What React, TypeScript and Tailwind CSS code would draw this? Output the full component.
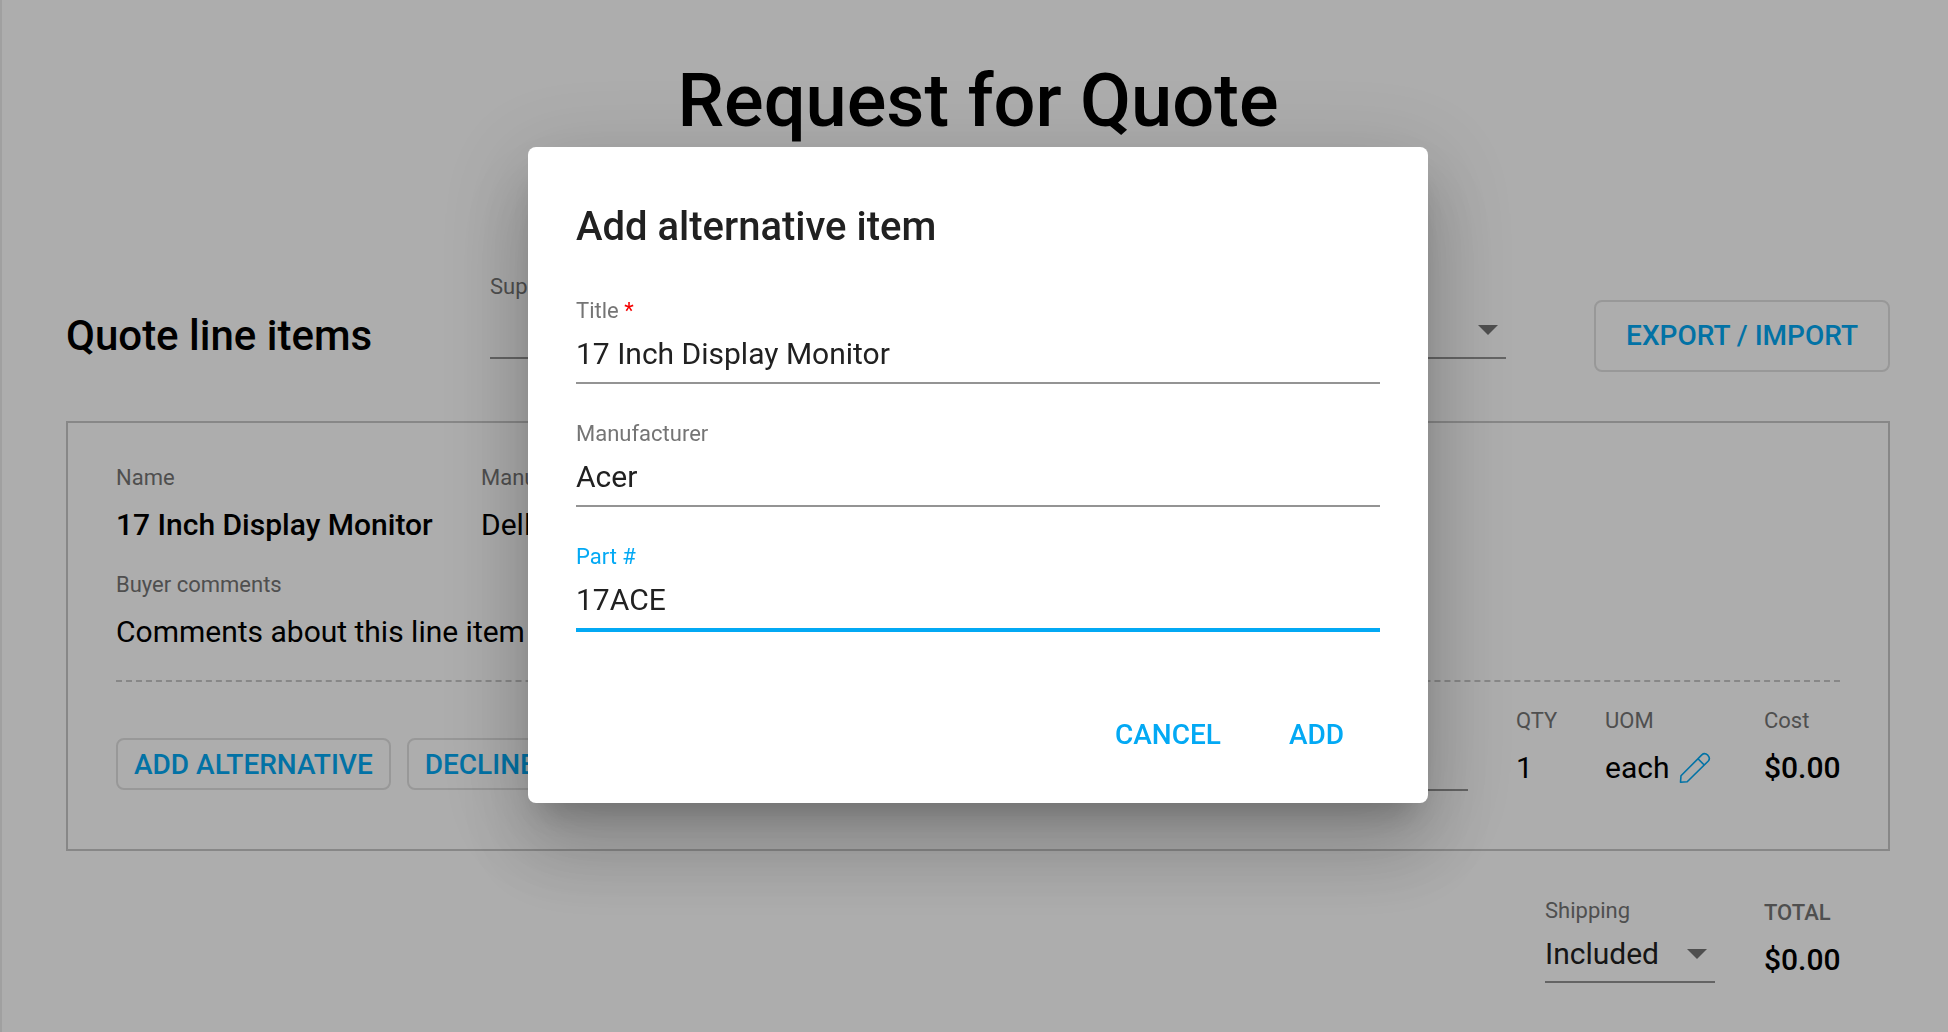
import { useState } from 'react'

function PencilIcon() {
  return (
    <svg width="32" height="32" viewBox="0 0 32 32" fill="none" stroke="currentColor" strokeWidth="1.6" strokeLinejoin="round">
      <path d="M1.5 30.2 L2 23.8 L22.8 2.9 Q25.6 0.3 28.8 3.2 Q31.8 6.4 29.1 9.2 L8.2 29.8 Z" />
      <path d="M19 6.8 L25.2 13" />
    </svg>
  )
}

function Caret({ className }: { className: string }) {
  return (
    <svg width="20" height="10" viewBox="0 0 20 10" className={`pointer-events-none absolute top-1/2 -translate-y-1/2 ${className}`}>
      <path d="M0 0h20L10 10z" fill="#757575" />
    </svg>
  )
}

interface InfoProps {
  label: string
  children: React.ReactNode
  className?: string
  labelClass?: string
}

function Info({ label, children, className = '', labelClass = '' }: InfoProps) {
  return (
    <div className={className}>
      <div className={`text-[22px] leading-7 text-[#757575] ${labelClass}`}>{label}</div>
      <div className="mt-4 flex text-[30px] leading-[34px] whitespace-nowrap text-black">{children}</div>
    </div>
  )
}

interface FieldProps {
  id: string
  label: string
  value: string
  onChange: (value: string) => void
  required?: boolean
  active?: boolean
}

function Field({ id, label, value, onChange, required, active }: FieldProps) {
  return (
    <div className="flex flex-col items-start">
      <label htmlFor={id} className={`text-[22px] leading-7 ${active ? 'text-[#03a9f4]' : 'text-[#757575]'}`}>
        {label}
        {required && <span className="text-[#f50000]"> *</span>}
      </label>
      <input
        id={id}
        type="text"
        value={value}
        required={required}
        onChange={(e) => onChange(e.target.value)}
        className={`w-full bg-transparent text-[30px] text-[#212121] outline-none ${
          active ? 'h-[61px] border-b-4 border-[#03a9f4]' : 'h-[59px] border-b-2 border-[#949494]'
        }`}
      />
    </div>
  )
}

export default function App() {
  const [title, setTitle] = useState('17 Inch Display Monitor')
  const [manufacturer, setManufacturer] = useState('Acer')
  const [part, setPart] = useState('17ACE')

  return (
    <div className="min-h-screen border-l-2 border-[#ececec] bg-white font-[Roboto,sans-serif]">
      <main className="pt-[61px] pr-[58px] pb-12 pl-16">
        <h1 className="text-center text-[74px] leading-20 font-medium text-black">Request for Quote</h1>

        {/* Section header */}
        <div className="mt-[132px] flex items-center">
          <h2 className="w-[424px] text-[42px] leading-12 font-medium text-black">Quote line items</h2>
          <div className="mr-[88px] flex flex-1 flex-col items-start pb-10">
            <label htmlFor="supplier" className="text-[22px] leading-7 text-[#757575]">Supplier</label>
            <div className="relative w-full">
              <select id="supplier" className="block h-[58px] w-full appearance-none border-b-2 border-[#949494] bg-transparent text-[30px] outline-none">
                <option value=""></option>
              </select>
              <Caret className="right-2" />
            </div>
          </div>
          <button type="button" className="h-18 rounded-lg border-2 border-[#e0e0e0] px-[30px] text-[28px] font-medium text-[#03a9f4]">
            EXPORT / IMPORT
          </button>
        </div>

        {/* Line item */}
        <section className="mt-[22px] border-2 border-[#c8c8c8] px-12 pt-[41px] pb-[58px]">
          <div className="flex">
            <Info label="Name" className="w-[365px]">
              <span className="font-medium">17 Inch Display Monitor</span>
            </Info>
            <Info label="Manufacturer">Dell</Info>
          </div>
          <Info label="Buyer comments" className="mt-[29px] w-fit">Comments about this line item</Info>

          <div className="mt-[31px] flex border-t-2 border-dashed border-[#c8c8c8] pt-[25px]">
            <div className="mt-[31px] flex h-13 gap-4">
              <button type="button" className="rounded-lg border-2 border-[#e0e0e0] px-4 pt-0.5 text-[28px] font-medium text-[#03a9f4]">
                ADD ALTERNATIVE
              </button>
              <button type="button" className="rounded-lg border-2 border-[#e0e0e0] px-4 pt-0.5 text-[28px] font-medium text-[#03a9f4]">
                DECLINE
              </button>
            </div>
            <div className="mr-12 ml-auto w-[200px] pt-7">
              <input type="text" aria-label="Price" className="block h-14 w-full border-b-2 border-[#949494] bg-transparent text-[30px] outline-none" />
            </div>
            <Info label="QTY" className="w-[89px]">1</Info>
            <Info label="UOM" className="w-[159px]">
              each
              <button type="button" aria-label="Edit unit" className="ml-2.5 text-[#03a9f4]">
                <PencilIcon />
              </button>
            </Info>
            <Info label="Cost" className="w-[76px]">
              <span className="font-medium">$0.00</span>
            </Info>
          </div>
        </section>

        {/* Totals */}
        <div className="flex justify-end pt-[46px] pr-[50px]">
          <div className="mr-[49px] w-[170px]">
            <label htmlFor="shipping" className="block text-[22px] leading-7 text-[#757575]">Shipping</label>
            <div className="relative">
              <select id="shipping" className="block h-[58px] w-full appearance-none border-b-2 border-[#949494] bg-transparent text-[30px] text-[#212121] outline-none">
                <option>Included</option>
              </select>
              <Caret className="right-2" />
            </div>
          </div>
          <Info label="TOTAL" className="mt-0.5 w-[76px]" labelClass="font-medium">
            <span className="font-medium">$0.00</span>
          </Info>
        </div>
      </main>

      {/* Dialog */}
      <div className="fixed inset-0 flex items-center justify-center bg-black/32 pb-[82px] pl-2">
        <form
          role="dialog"
          aria-labelledby="dialog-title"
          onSubmit={(e) => e.preventDefault()}
          className="w-[900px] rounded-lg bg-white px-12 pt-14 pb-8 shadow-[0_22px_30px_-14px_rgba(0,0,0,0.2),0_48px_76px_6px_rgba(0,0,0,0.14),0_18px_92px_16px_rgba(0,0,0,0.12)]"
        >
          <h2 id="dialog-title" className="text-[40px] leading-12 font-medium text-[#212121]">Add alternative item</h2>
          <div className="mt-[46px] flex flex-col gap-9">
            <Field id="title" label="Title" value={title} onChange={setTitle} required />
            <Field id="manufacturer" label="Manufacturer" value={manufacturer} onChange={setManufacturer} />
            <Field id="part" label="Part #" value={part} onChange={setPart} active />
          </div>
          <div className="mt-[67px] flex justify-end gap-3 pr-2">
            <button type="button" className="h-18 px-7 text-[28px] font-medium text-[#03a9f4]">CANCEL</button>
            <button type="submit" className="h-18 px-7 text-[28px] font-medium text-[#03a9f4]">ADD</button>
          </div>
        </form>
      </div>
    </div>
  )
}
